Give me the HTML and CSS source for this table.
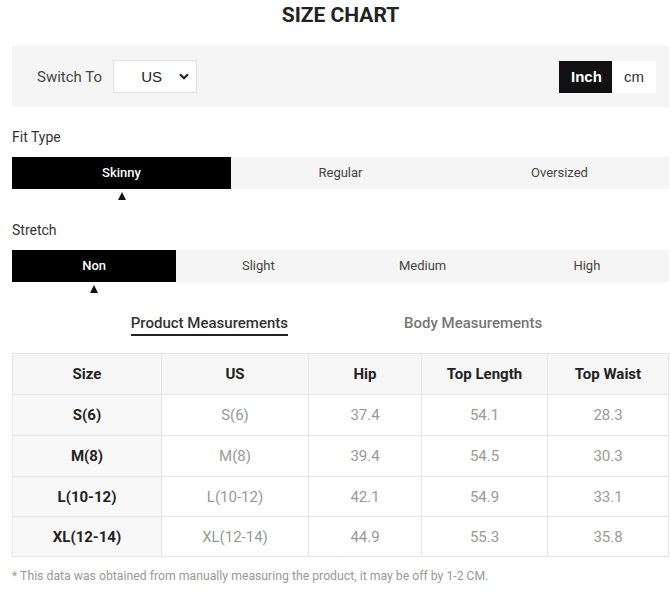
FILE: index.html
```html
<!DOCTYPE html>
<html>
<head>
<meta charset="utf-8">
<link rel="stylesheet" href="styles.css">
</head>
<body>
<div class="page">
  <h1 class="title">SIZE CHART</h1>
  <div class="switchbar">
    <div class="switch-left">
      <span class="switch-label">Switch To</span>
      <div class="select">
        <span class="select-value">US</span>
        <svg class="chev" width="10" height="7" viewBox="0 0 10 7"><path d="M1 1.2 L5 5.2 L9 1.2" fill="none" stroke="#222" stroke-width="2.2"/></svg>
      </div>
    </div>
    <div class="units">
      <span class="unit active">Inch</span>
      <span class="unit">cm</span>
    </div>
  </div>

  <div class="group-label">Fit Type</div>
  <div class="tabs three">
    <div class="tab active">Skinny<span class="tri"></span></div>
    <div class="tab">Regular</div>
    <div class="tab">Oversized</div>
  </div>

  <div class="group-label second">Stretch</div>
  <div class="tabs four">
    <div class="tab active">Non<span class="tri"></span></div>
    <div class="tab">Slight</div>
    <div class="tab">Medium</div>
    <div class="tab">High</div>
  </div>

  <div class="mtabs">
    <span class="mtab active">Product Measurements</span>
    <span class="mtab">Body Measurements</span>
  </div>

  <table class="chart">
    <colgroup>
      <col style="width:149px"><col style="width:147px"><col style="width:113px"><col style="width:126px"><col>
    </colgroup>
    <thead>
      <tr><th>Size</th><th>US</th><th>Hip</th><th>Top Length</th><th>Top Waist</th></tr>
    </thead>
    <tbody>
      <tr><th>S(6)</th><td>S(6)</td><td>37.4</td><td>54.1</td><td>28.3</td></tr>
      <tr><th>M(8)</th><td>M(8)</td><td>39.4</td><td>54.5</td><td>30.3</td></tr>
      <tr><th>L(10-12)</th><td>L(10-12)</td><td>42.1</td><td>54.9</td><td>33.1</td></tr>
      <tr><th>XL(12-14)</th><td>XL(12-14)</td><td>44.9</td><td>55.3</td><td>35.8</td></tr>
    </tbody>
  </table>

  <p class="note">* This data was obtained from manually measuring the product, it may be off by 1-2 CM.</p>
</div>
</body>
</html>
```

FILE: styles.css
```css
html, body {
  margin: 0;
  padding: 0;
  background: #fff;
}
body {
  font-family: Roboto, "Liberation Sans", sans-serif;
  color: #333;
}
.page {
  width: 671px;
}
.title {
  margin: 0 2px 0 12px;
  height: 30px;
  line-height: 30px;
  text-align: center;
  font-size: 21px;
  font-weight: 700;
  color: #222;
}
.switchbar {
  margin: 16px 2px 0 12px;
  height: 61px;
  background: #f5f5f5;
  display: flex;
  align-items: center;
  justify-content: space-between;
  padding: 0 13px 0 25px;
}
.switch-left {
  display: flex;
  align-items: center;
  gap: 11px;
}
.switch-label {
  font-size: 15px;
  color: #444;
}
.select {
  width: 84px;
  height: 33px;
  box-sizing: border-box;
  background: #fff;
  border: 1px solid #e2e2e2;
  display: flex;
  align-items: center;
  justify-content: flex-end;
  padding-right: 7px;
  gap: 17px;
  font-family: "Liberation Sans", Arial, sans-serif;
  font-size: 15px;
  color: #222;
}
.chev {
  display: block;
}
.units {
  display: flex;
}
.unit {
  height: 32px;
  line-height: 32px;
  padding: 0 12px;
  font-family: "Liberation Sans", Arial, sans-serif;
  font-size: 15px;
  background: #fff;
  color: #333;
}
.unit.active {
  background: #111;
  color: #fff;
  font-weight: 700;
  width: 29px;
}
.group-label {
  margin: 20px 0 0 12px;
  font-size: 14px;
  line-height: 20px;
  color: #333;
}
.group-label.second {
  margin-top: 31px;
}
.tabs {
  margin: 10px 2px 0 12px;
  display: grid;
  background: #f5f5f5;
}
.tabs.three { grid-template-columns: repeat(3, 1fr); }
.tabs.four { grid-template-columns: repeat(4, 1fr); }
.tab {
  position: relative;
  height: 32px;
  line-height: 32px;
  text-align: center;
  font-size: 13px;
  color: #444;
}
.tab.active {
  background: #000;
  color: #fff;
  font-weight: 500;
}
.tri {
  position: absolute;
  left: 50%;
  top: 35px;
  margin-left: -4px;
  width: 0;
  height: 0;
  border-left: 4px solid transparent;
  border-right: 4px solid transparent;
  border-bottom: 8px solid #111;
}
.mtabs {
  margin: 31px 0 0 12px;
  display: flex;
  justify-content: center;
  gap: 116px;
  padding-right: 10px;
}
.mtab {
  font-size: 15px;
  line-height: 20px;
  color: #777;
  font-weight: 500;
  padding-bottom: 1px;
  border-bottom: 2px solid transparent;
}
.mtab.active {
  color: #333;
  border-bottom-color: #222;
}
.chart {
  margin: 17px 2px 0 12px;
  width: 657px;
  border-collapse: collapse;
  table-layout: fixed;
}
.chart th, .chart td {
  border: 1px solid #e6e6e6;
  height: 40px;
  padding: 0;
  text-align: center;
  font-size: 15px;
}
.chart tbody tr:nth-child(n+3) th,
.chart tbody tr:nth-child(n+3) td {
  height: 39px;
}
.chart thead th {
  background: #f6f6f6;
  font-weight: 700;
  color: #222;
}
.chart tbody th {
  background: #f8f8f8;
  font-weight: 700;
  color: #222;
}
.chart td {
  color: #999;
  font-weight: 400;
}
.note {
  margin: 11px 0 0 12px;
  font-size: 12.25px;
  line-height: 16px;
  color: #999;
}
```
